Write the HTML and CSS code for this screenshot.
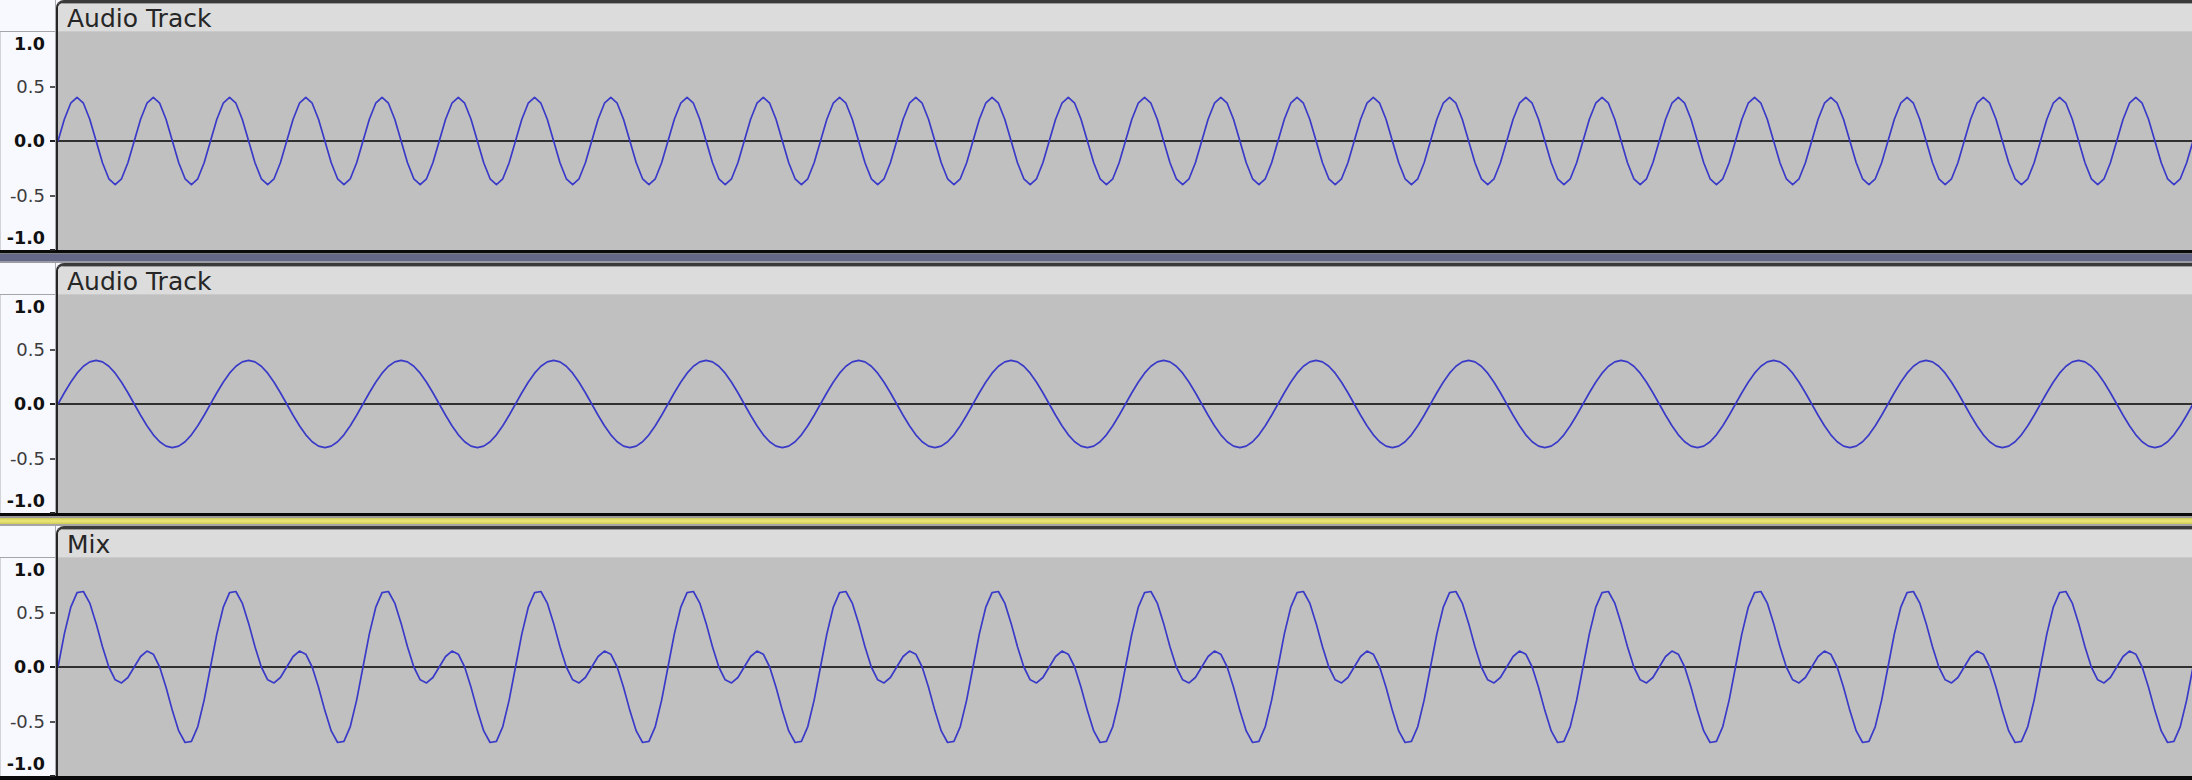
FILE: index.html
```html
<!DOCTYPE html>
<html lang="en">
<head>
<meta charset="utf-8">
<title>Tracks</title>
<link rel="stylesheet" href="styles.css">
</head>
<body>
<main class="tracks">
  <section class="track">
    <div class="ruler">
      <div class="ruler-head"></div>
      <div class="ruler-scale">
        <div class="tick tick-top major" style="top:0%"><span class="lbl">1.0</span></div>
        <div class="tick" style="top:25%"><span class="lbl">0.5</span><span class="mark"></span></div>
        <div class="tick major" style="top:50%"><span class="lbl">0.0</span><span class="mark"></span></div>
        <div class="tick" style="top:75%"><span class="lbl">-0.5</span><span class="mark"></span></div>
        <div class="tick tick-bottom major" style="top:100%"><span class="lbl">-1.0</span><span class="mark"></span></div>
      </div>
    </div>
    <div class="frame">
      <div class="header"><span class="name">Audio Track</span></div>
      <div class="wave"><svg class="wave-svg" data-a1="0.4" data-a2="0"></svg></div>
    </div>
  </section>
  <div class="sep sep-blue"></div>
  <section class="track">
    <div class="ruler">
      <div class="ruler-head"></div>
      <div class="ruler-scale">
        <div class="tick tick-top major" style="top:0%"><span class="lbl">1.0</span></div>
        <div class="tick" style="top:25%"><span class="lbl">0.5</span><span class="mark"></span></div>
        <div class="tick major" style="top:50%"><span class="lbl">0.0</span><span class="mark"></span></div>
        <div class="tick" style="top:75%"><span class="lbl">-0.5</span><span class="mark"></span></div>
        <div class="tick tick-bottom major" style="top:100%"><span class="lbl">-1.0</span><span class="mark"></span></div>
      </div>
    </div>
    <div class="frame">
      <div class="header"><span class="name">Audio Track</span></div>
      <div class="wave"><svg class="wave-svg" data-a1="0" data-a2="0.4"></svg></div>
    </div>
  </section>
  <div class="sep sep-yellow"></div>
  <section class="track">
    <div class="ruler">
      <div class="ruler-head"></div>
      <div class="ruler-scale">
        <div class="tick tick-top major" style="top:0%"><span class="lbl">1.0</span></div>
        <div class="tick" style="top:25%"><span class="lbl">0.5</span><span class="mark"></span></div>
        <div class="tick major" style="top:50%"><span class="lbl">0.0</span><span class="mark"></span></div>
        <div class="tick" style="top:75%"><span class="lbl">-0.5</span><span class="mark"></span></div>
        <div class="tick tick-bottom major" style="top:100%"><span class="lbl">-1.0</span><span class="mark"></span></div>
      </div>
    </div>
    <div class="frame">
      <div class="header"><span class="name">Mix</span></div>
      <div class="wave"><svg class="wave-svg" data-a1="0.4" data-a2="0.4"></svg></div>
    </div>
  </section>
</main>
<script src="script.js"></script>
</body>
</html>
```

FILE: styles.css
```css
* { box-sizing: border-box; }
html, body { margin: 0; height: 100%; }
body {
  background: #0a0a0a;
  overflow: hidden;
  font-family: "DejaVu Sans", "Noto Sans", sans-serif;
}
.tracks { display: flex; flex-direction: column; }
.track {
  display: grid;
  grid-template-columns: 56px 1fr;
  background: #f8f8ff;
  border-bottom: 3px solid #0a0a0a;
}
.ruler {
  display: flex;
  flex-direction: column;
  border-right: 1px solid #a9a9b2;
}
.ruler-head {
  height: 32px;
  border-bottom: 1px solid #a4a4ac;
}
.ruler-scale {
  position: relative;
  height: 218px;
  border-left: 1px solid #d2d2da;
}
.tick {
  position: absolute;
  right: 0;
  height: 20px;
  display: flex;
  align-items: center;
  gap: 5px;
  transform: translateY(-50%);
}
.lbl {
  font-size: 18px;
  line-height: 20px;
  color: #3c3c3c;
  white-space: nowrap;
}
.major .lbl {
  font-weight: bold;
  font-size: 17.5px;
  color: #111;
}
.mark {
  width: 5px;
  height: 2px;
  background: #555;
}
.major .mark { background: #222; }
.tick-top { transform: translateY(2px); }
.tick-top .lbl { margin-right: 10px; }
.tick-bottom {
  transform: translateY(-100%);
  align-items: flex-end;
}
.tick-bottom .lbl { margin-bottom: 2px; }
.tick-bottom .mark { margin-bottom: -1px; }

.frame {
  display: flex;
  flex-direction: column;
  border-top: 3px solid #3a3a3a;
  border-left: 2px solid #262626;
  border-top-left-radius: 8px;
  overflow: hidden;
  background: #c0c0c0;
}
.header {
  height: 29px;
  border-top: 1px solid #9c9c9c;
  border-bottom: 1px solid #cacaca;
  background: #dcdcdc;
  padding: 2px 0 0 9px;
}
.name {
  display: block;
  font-size: 25px;
  line-height: 25px;
  color: #262626;
  white-space: nowrap;
}
.wave { height: 218px; }
.wave-svg { display: block; width: 100%; height: 100%; }

.sep { height: 10px; }
.sep-blue {
  background: #646787;
  border-top: 1px solid #7c7c84;
  border-bottom: 2px solid #9c9ca4;
}
.sep-yellow {
  border-top: 2px solid #9a9a9a;
  border-bottom: 2px solid #a6a6a6;
  background: linear-gradient(#cfcb55, #ece878 50%, #cfcb55);
}
```

FILE: script.js
```js
(function () {
  var NS = "http://www.w3.org/2000/svg";
  var p1 = 76.25, p2 = 152.5, step = p1 / 12;
  document.querySelectorAll(".wave-svg").forEach(function (svg) {
    var w = svg.clientWidth, h = svg.clientHeight;
    var a1 = parseFloat(svg.dataset.a1 || "0");
    var a2 = parseFloat(svg.dataset.a2 || "0");
    var mid = h / 2;
    var line = document.createElementNS(NS, "line");
    line.setAttribute("x1", "0");
    line.setAttribute("x2", String(w));
    line.setAttribute("y1", String(mid));
    line.setAttribute("y2", String(mid));
    line.setAttribute("stroke", "#000");
    line.setAttribute("stroke-width", "1.6");
    svg.appendChild(line);
    var pts = [];
    for (var i = 0; ; i++) {
      var x = i * step;
      var v = a1 * Math.sin(2 * Math.PI * x / p1) + a2 * Math.sin(2 * Math.PI * x / p2);
      pts.push(x.toFixed(2) + "," + (mid - v * mid).toFixed(2));
      if (x > w) break;
    }
    var poly = document.createElementNS(NS, "polyline");
    poly.setAttribute("points", pts.join(" "));
    poly.setAttribute("fill", "none");
    poly.setAttribute("stroke", "#3a3ac8");
    poly.setAttribute("stroke-width", "1.7");
    poly.setAttribute("stroke-linejoin", "round");
    svg.appendChild(poly);
  });
})();
```
